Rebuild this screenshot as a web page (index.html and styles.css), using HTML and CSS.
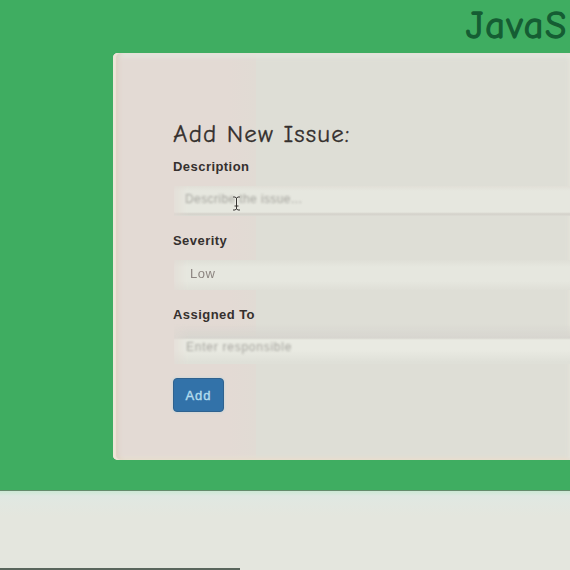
FILE: index.html
```html
<!DOCTYPE html>
<html lang="en">
<head>
<meta charset="utf-8">
<title>Issue Tracker</title>
<link rel="stylesheet" href="styles.css">
</head>
<body>
<main class="hero">
  <h1 class="title">JavaS</h1>
  <section class="panel">
    <h2 class="heading">Add New Issue:</h2>
    <form class="form">
      <div class="group">
        <div class="label">Description</div>
        <div class="field description"><span class="placeholder">Describe the issue...</span>
          <svg class="cursor" viewBox="0 0 9 17"><path class="halo" d="M1 2h2l1.5 1L6 2h2M4.5 3v11M1 15h2l1.5-1L6 15h2M2.5 11h4"/><path class="beam" d="M1 2h2l1.5 1L6 2h2M4.5 3v11M1 15h2l1.5-1L6 15h2M2.5 11h4"/></svg>
        </div>
      </div>
      <div class="group">
        <div class="label">Severity</div>
        <div class="field severity"><span class="value">Low</span></div>
      </div>
      <div class="group">
        <div class="label">Assigned To</div>
        <div class="field assigned"><span class="placeholder">Enter responsible</span></div>
      </div>
      <button class="add" type="button">Add</button>
    </form>
  </section>
</main>
<footer class="below"><div class="status"></div></footer>
</body>
</html>
```

FILE: styles.css
```css
* { box-sizing: border-box; }
body {
  margin: 0;
  width: 570px;
  height: 570px;
  overflow: hidden;
  background: #e4e6de;
  font-family: "Liberation Sans", Arial, sans-serif;
  color: #35302e;
}
.hero {
  height: 490px;
  overflow: hidden;
  background: #3fad61;
}
.title {
  height: 53px;
  margin: 0;
  padding: 6px 0 0 466px;
  font: 400 38px/40px "Comic Sans MS", "Comic Neue", Lato, sans-serif;
  letter-spacing: 1.9px;
  white-space: nowrap;
  color: #155d33;
  -webkit-text-stroke: 1.3px #155d33;
}
.panel {
  width: 457px;
  height: 407px;
  margin-left: 113px;
  padding: 67px 0 0 60px;
  border-radius: 5px 0 0 5px;
  background: linear-gradient(90deg, #e3dad4 115px, #e1dbd4 143px, #deded6 143px);
  box-shadow: inset 3px 0 1px #eee5d8, inset 7px 0 5px -2px #ddcfc0, inset 0 4px 5px #e4e7df, inset 0 -3px 3px #e7dfd2;
}
.heading {
  height: 38px;
  margin: 0;
  font: 400 25px/28px "Comic Sans MS", "Comic Neue", Lato, sans-serif;
  letter-spacing: 1.1px;
  white-space: nowrap;
  color: #35302e;
  -webkit-text-stroke: 0.3px #35302e;
}
.group {
  height: 74px;
  overflow: hidden;
}
.label {
  height: 28px;
  font-size: 13px;
  font-weight: 700;
  line-height: 18px;
  letter-spacing: 0.45px;
}
.field {
  position: relative;
  display: flex;
  align-items: center;
  height: 30px;
  margin-left: 1px;
  padding-bottom: 4px;
  font-size: 12px;
  -webkit-mask-image: linear-gradient(90deg, rgba(0, 0, 0, 0.4), #000 14px);
  mask-image: linear-gradient(90deg, rgba(0, 0, 0, 0.4), #000 14px);
}
.description {
  padding-left: 11px;
  background: linear-gradient(#e1dfd7, #e6e7df 5px, #e6e7df 26px, #d3d1ca 28px, #dcdcd4 30px);
}
.severity {
  padding-left: 16px;
  background: linear-gradient(#dfdfd7, #e6e7df 7px, #e6e7df 21px, #dfdfd7);
}
.assigned {
  height: 40px;
  margin-top: -10px;
  padding: 6px 0 0 12px;
  background: linear-gradient(#deded600, #d7d5cf 14px, #e9eae2 16px, #e9eae2 26px, #dfe0d8 38px);
}
.placeholder {
  color: #a5a49e;
  filter: blur(1px);
  white-space: nowrap;
  letter-spacing: 0.4px;
}
.assigned .placeholder { letter-spacing: 0.75px; }
.value { color: #8c8580; font-size: 13px; letter-spacing: 0.5px; }
.cursor {
  position: absolute;
  left: 58px;
  top: 9px;
  width: 9px;
  height: 17px;
  fill: none;
}
.halo { stroke: #eeeee8; stroke-width: 2.5; }
.beam { stroke: #34322f; stroke-width: 1; }
.add {
  display: block;
  width: 51px;
  height: 34px;
  margin: -2px 0 0;
  padding: 0;
  border: 1px solid #2f628f;
  border-radius: 4px;
  background: #3272a9;
  box-shadow: 0 0 3px #bdd4dc;
  font: 13px "Liberation Sans", Arial, sans-serif;
  letter-spacing: 1px;
  color: #b2dced;
  -webkit-text-stroke: 0.4px #b2dced;
}
.below {
  display: flex;
  align-items: flex-end;
  height: 80px;
  border-top: 1px solid #658b6d;
  background: linear-gradient(#cbe9d5, #e0e8e2 5px, #e4e6de 25px);
}
.status {
  width: 240px;
  height: 2px;
  background: #59665c;
}
```
